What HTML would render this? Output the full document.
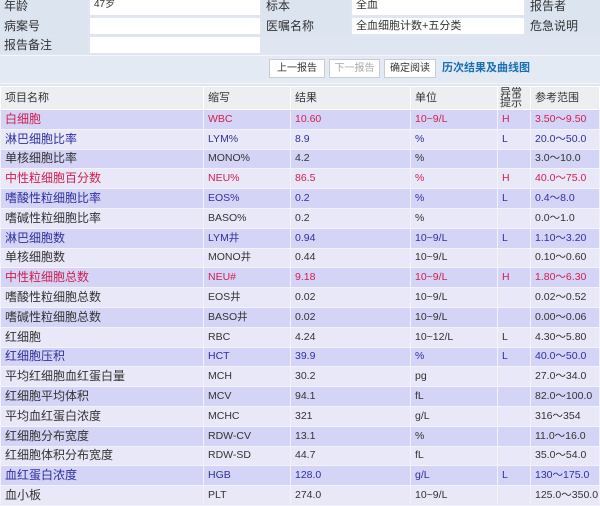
<html><head><style>
body{margin:0;width:600px;height:500px;overflow:hidden;background:#dfe6f2;font-family:"Liberation Sans","Noto Sans CJK SC",sans-serif;font-size:11px;color:#333;position:relative}
.a{position:absolute;box-sizing:border-box;padding-left:4px;line-height:17px;white-space:nowrap}
.l{background:#dce4f0;font-size:12px}
.v{background:#fff}
.btn{position:absolute;top:59px;height:19px;background:#fff;border:1px solid #c8ccd4;box-sizing:border-box;font-size:10px;line-height:17px;text-align:center}
table{position:absolute;left:0;top:86px;width:600px;border-collapse:collapse;table-layout:fixed}
td{border:1px solid #f2f2f8;padding:0 0 0 4px;height:19.8px;line-height:17px;vertical-align:middle;white-space:nowrap;overflow:hidden;font-size:10.5px}
td:first-child{font-size:12px}
tr.h td{background:#eceef2;height:23px;font-size:11px;border-color:#fff}
tr.h td:first-child{font-size:11px}
tr:nth-child(even) td{background:#d4d4f6}
tr:nth-child(odd):not(.h) td{background:#e8e8f8}
.r td{color:#d02050}.b td{color:#3030a0}
</style></head><body>
<div class="a l" style="left:0;top:0;width:88px;height:17px;line-height:12px">年龄</div>
<div class="a v" style="left:90px;top:0;width:170px;height:15px;line-height:10px;font-size:10px">47岁</div>
<div class="a l" style="left:262px;top:0;width:88px;height:17px;line-height:12px">标本</div>
<div class="a v" style="left:352px;top:0;width:172px;height:15px;line-height:10px">全血</div>
<div class="a l" style="left:526px;top:0;width:74px;height:17px;line-height:12px">报告者</div>
<div class="a l" style="left:0;top:17px;width:88px;height:18px;line-height:18px">病案号</div>
<div class="a v" style="left:90px;top:18px;width:170px;height:16px"></div>
<div class="a l" style="left:262px;top:17px;width:88px;height:18px;line-height:18px">医嘱名称</div>
<div class="a v" style="left:352px;top:18px;width:172px;height:16px;line-height:16px;font-size:11px">全血细胞计数+五分类</div>
<div class="a l" style="left:526px;top:17px;width:74px;height:18px;line-height:18px">危急说明</div>
<div class="a l" style="left:0;top:36px;width:88px;height:18px;line-height:18px">报告备注</div>
<div class="a v" style="left:90px;top:37px;width:170px;height:16px"></div>
<div style="position:absolute;left:0;top:55px;width:600px;height:27px;background:#e4eaf4;border-top:1px solid #f4f6fa;border-bottom:1px solid #f4f6fa"></div>
<div class="btn" style="left:269px;width:56px">上一报告</div>
<div class="btn" style="left:329px;width:51px;color:#aaa">下一报告</div>
<div class="btn" style="left:384px;width:52px">确定阅读</div>
<div class="a" style="left:438px;top:60px;color:#1a6fb0;font-weight:bold;font-size:11px">历次结果及曲线图</div>
<table>
<colgroup><col style="width:203px"><col style="width:87px"><col style="width:120px"><col style="width:87px"><col style="width:33px"><col></colgroup>
<tr class="h"><td>项目名称</td><td>缩写</td><td>结果</td><td>单位</td><td style="line-height:10px;padding-left:2px">异常<br>提示</td><td>参考范围</td></tr>
<tr class="r"><td>白细胞</td><td>WBC</td><td>10.60</td><td>10~9/L</td><td>H</td><td>3.50～9.50</td></tr>
<tr class="b"><td>淋巴细胞比率</td><td>LYM%</td><td>8.9</td><td>%</td><td>L</td><td>20.0～50.0</td></tr>
<tr><td>单核细胞比率</td><td>MONO%</td><td>4.2</td><td>%</td><td></td><td>3.0～10.0</td></tr>
<tr class="r"><td>中性粒细胞百分数</td><td>NEU%</td><td>86.5</td><td>%</td><td>H</td><td>40.0～75.0</td></tr>
<tr class="b"><td>嗜酸性粒细胞比率</td><td>EOS%</td><td>0.2</td><td>%</td><td>L</td><td>0.4～8.0</td></tr>
<tr><td>嗜碱性粒细胞比率</td><td>BASO%</td><td>0.2</td><td>%</td><td></td><td>0.0～1.0</td></tr>
<tr class="b"><td>淋巴细胞数</td><td>LYM井</td><td>0.94</td><td>10~9/L</td><td>L</td><td>1.10～3.20</td></tr>
<tr><td>单核细胞数</td><td>MONO井</td><td>0.44</td><td>10~9/L</td><td></td><td>0.10～0.60</td></tr>
<tr class="r"><td>中性粒细胞总数</td><td>NEU#</td><td>9.18</td><td>10~9/L</td><td>H</td><td>1.80～6.30</td></tr>
<tr><td>嗜酸性粒细胞总数</td><td>EOS井</td><td>0.02</td><td>10~9/L</td><td></td><td>0.02～0.52</td></tr>
<tr><td>嗜碱性粒细胞总数</td><td>BASO井</td><td>0.02</td><td>10~9/L</td><td></td><td>0.00～0.06</td></tr>
<tr><td>红细胞</td><td>RBC</td><td>4.24</td><td>10~12/L</td><td>L</td><td>4.30～5.80</td></tr>
<tr class="b"><td>红细胞压积</td><td>HCT</td><td>39.9</td><td>%</td><td>L</td><td>40.0～50.0</td></tr>
<tr><td>平均红细胞血红蛋白量</td><td>MCH</td><td>30.2</td><td>pg</td><td></td><td>27.0～34.0</td></tr>
<tr><td>红细胞平均体积</td><td>MCV</td><td>94.1</td><td>fL</td><td></td><td>82.0～100.0</td></tr>
<tr><td>平均血红蛋白浓度</td><td>MCHC</td><td>321</td><td>g/L</td><td></td><td>316～354</td></tr>
<tr><td>红细胞分布宽度</td><td>RDW-CV</td><td>13.1</td><td>%</td><td></td><td>11.0～16.0</td></tr>
<tr><td>红细胞体积分布宽度</td><td>RDW-SD</td><td>44.7</td><td>fL</td><td></td><td>35.0～54.0</td></tr>
<tr class="b"><td>血红蛋白浓度</td><td>HGB</td><td>128.0</td><td>g/L</td><td>L</td><td>130～175.0</td></tr>
<tr><td>血小板</td><td>PLT</td><td>274.0</td><td>10~9/L</td><td></td><td>125.0～350.0</td></tr>
</table>
</body></html>
